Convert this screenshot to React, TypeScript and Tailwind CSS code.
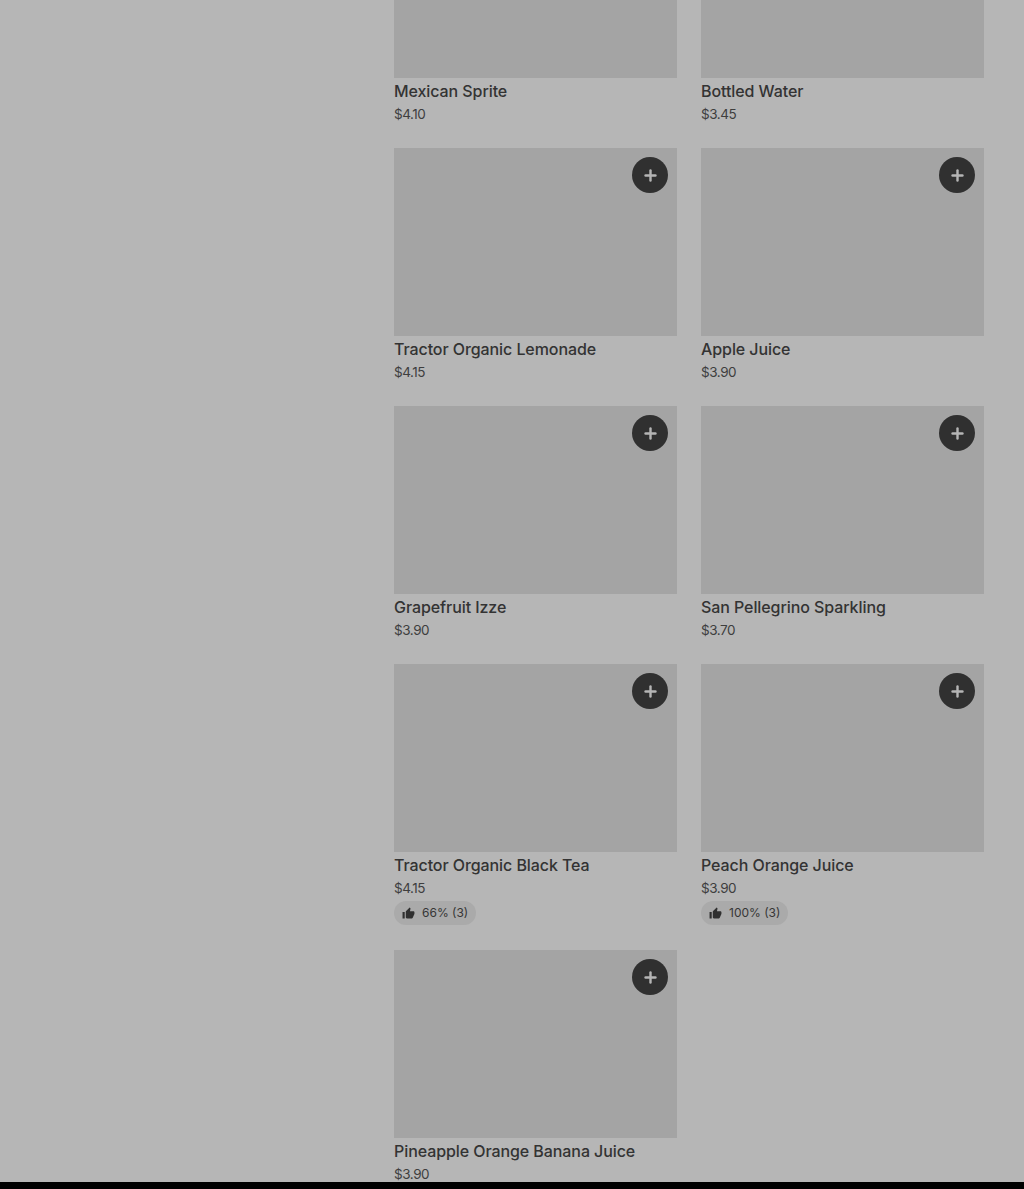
import { Plus } from "lucide-react";
import { MdThumbUp } from "react-icons/md";

type Item = {
  name: string;
  price: string;
  rating?: string;
};

const firstRow: Item[] = [
  { name: "Mexican Sprite", price: "$4.10" },
  { name: "Bottled Water", price: "$3.45" },
];

const items: Item[] = [
  { name: "Tractor Organic Lemonade", price: "$4.15" },
  { name: "Apple Juice", price: "$3.90" },
  { name: "Grapefruit Izze", price: "$3.90" },
  { name: "San Pellegrino Sparkling", price: "$3.70" },
  { name: "Tractor Organic Black Tea", price: "$4.15", rating: "66% (3)" },
  { name: "Peach Orange Juice", price: "$3.90", rating: "100% (3)" },
  { name: "Pineapple Orange Banana Juice", price: "$3.90" },
];

function ItemText({ item }: { item: Item }) {
  return (
    <div>
      <div className="mt-[3px] h-[20px] text-[16px] leading-[20px] font-medium tracking-[-0.08px] text-[#333333]">{item.name}</div>
      <div className="mt-[3px] h-[20px] text-[13.5px] leading-[20px] tracking-[-0.45px] text-[#3e3e3e]">{item.price}</div>
      {item.rating ? (
        <div className="mt-[3px] inline-flex h-[24px] items-center gap-[7px] rounded-full bg-[#aaaaaa] px-[8px] text-[12px] text-[#363636]">
          <MdThumbUp className="h-[13px] w-[13px] text-[#303030]" aria-hidden="true" />
          {item.rating}
        </div>
      ) : null}
    </div>
  );
}

function ItemCard({ item }: { item: Item }) {
  return (
    <div>
      <div className="relative h-[188px] bg-[#a4a4a4]">
        <button
          className="absolute top-[9px] right-[9px] flex h-[36px] w-[36px] items-center justify-center rounded-full bg-[#303030] text-[#b5b5b5]"
          type="button"
        >
          <Plus className="h-[17px] w-[17px]" strokeWidth={3.4} aria-hidden="true" />
        </button>
      </div>
      <ItemText item={item} />
    </div>
  );
}

export default function App() {
  return (
    <div className="flex h-[1189px] flex-col overflow-hidden bg-[#b6b6b6] font-['Inter',sans-serif]">
      <div className="grid flex-1 grid-cols-[283px_283px] content-start gap-x-[24px] overflow-hidden pl-[394px]">
        {firstRow.map((item) => (
          <div key={item.name} className="h-[148px]">
            <div className="h-[78px] bg-[#a4a4a4]" />
            <ItemText item={item} />
          </div>
        ))}
        {items.map((item) => (
          <div key={item.name} className={item.rating ? "h-[286px]" : "h-[258px]"}>
            <ItemCard item={item} />
          </div>
        ))}
      </div>
      <div className="h-[7px] bg-black" />
    </div>
  );
}
